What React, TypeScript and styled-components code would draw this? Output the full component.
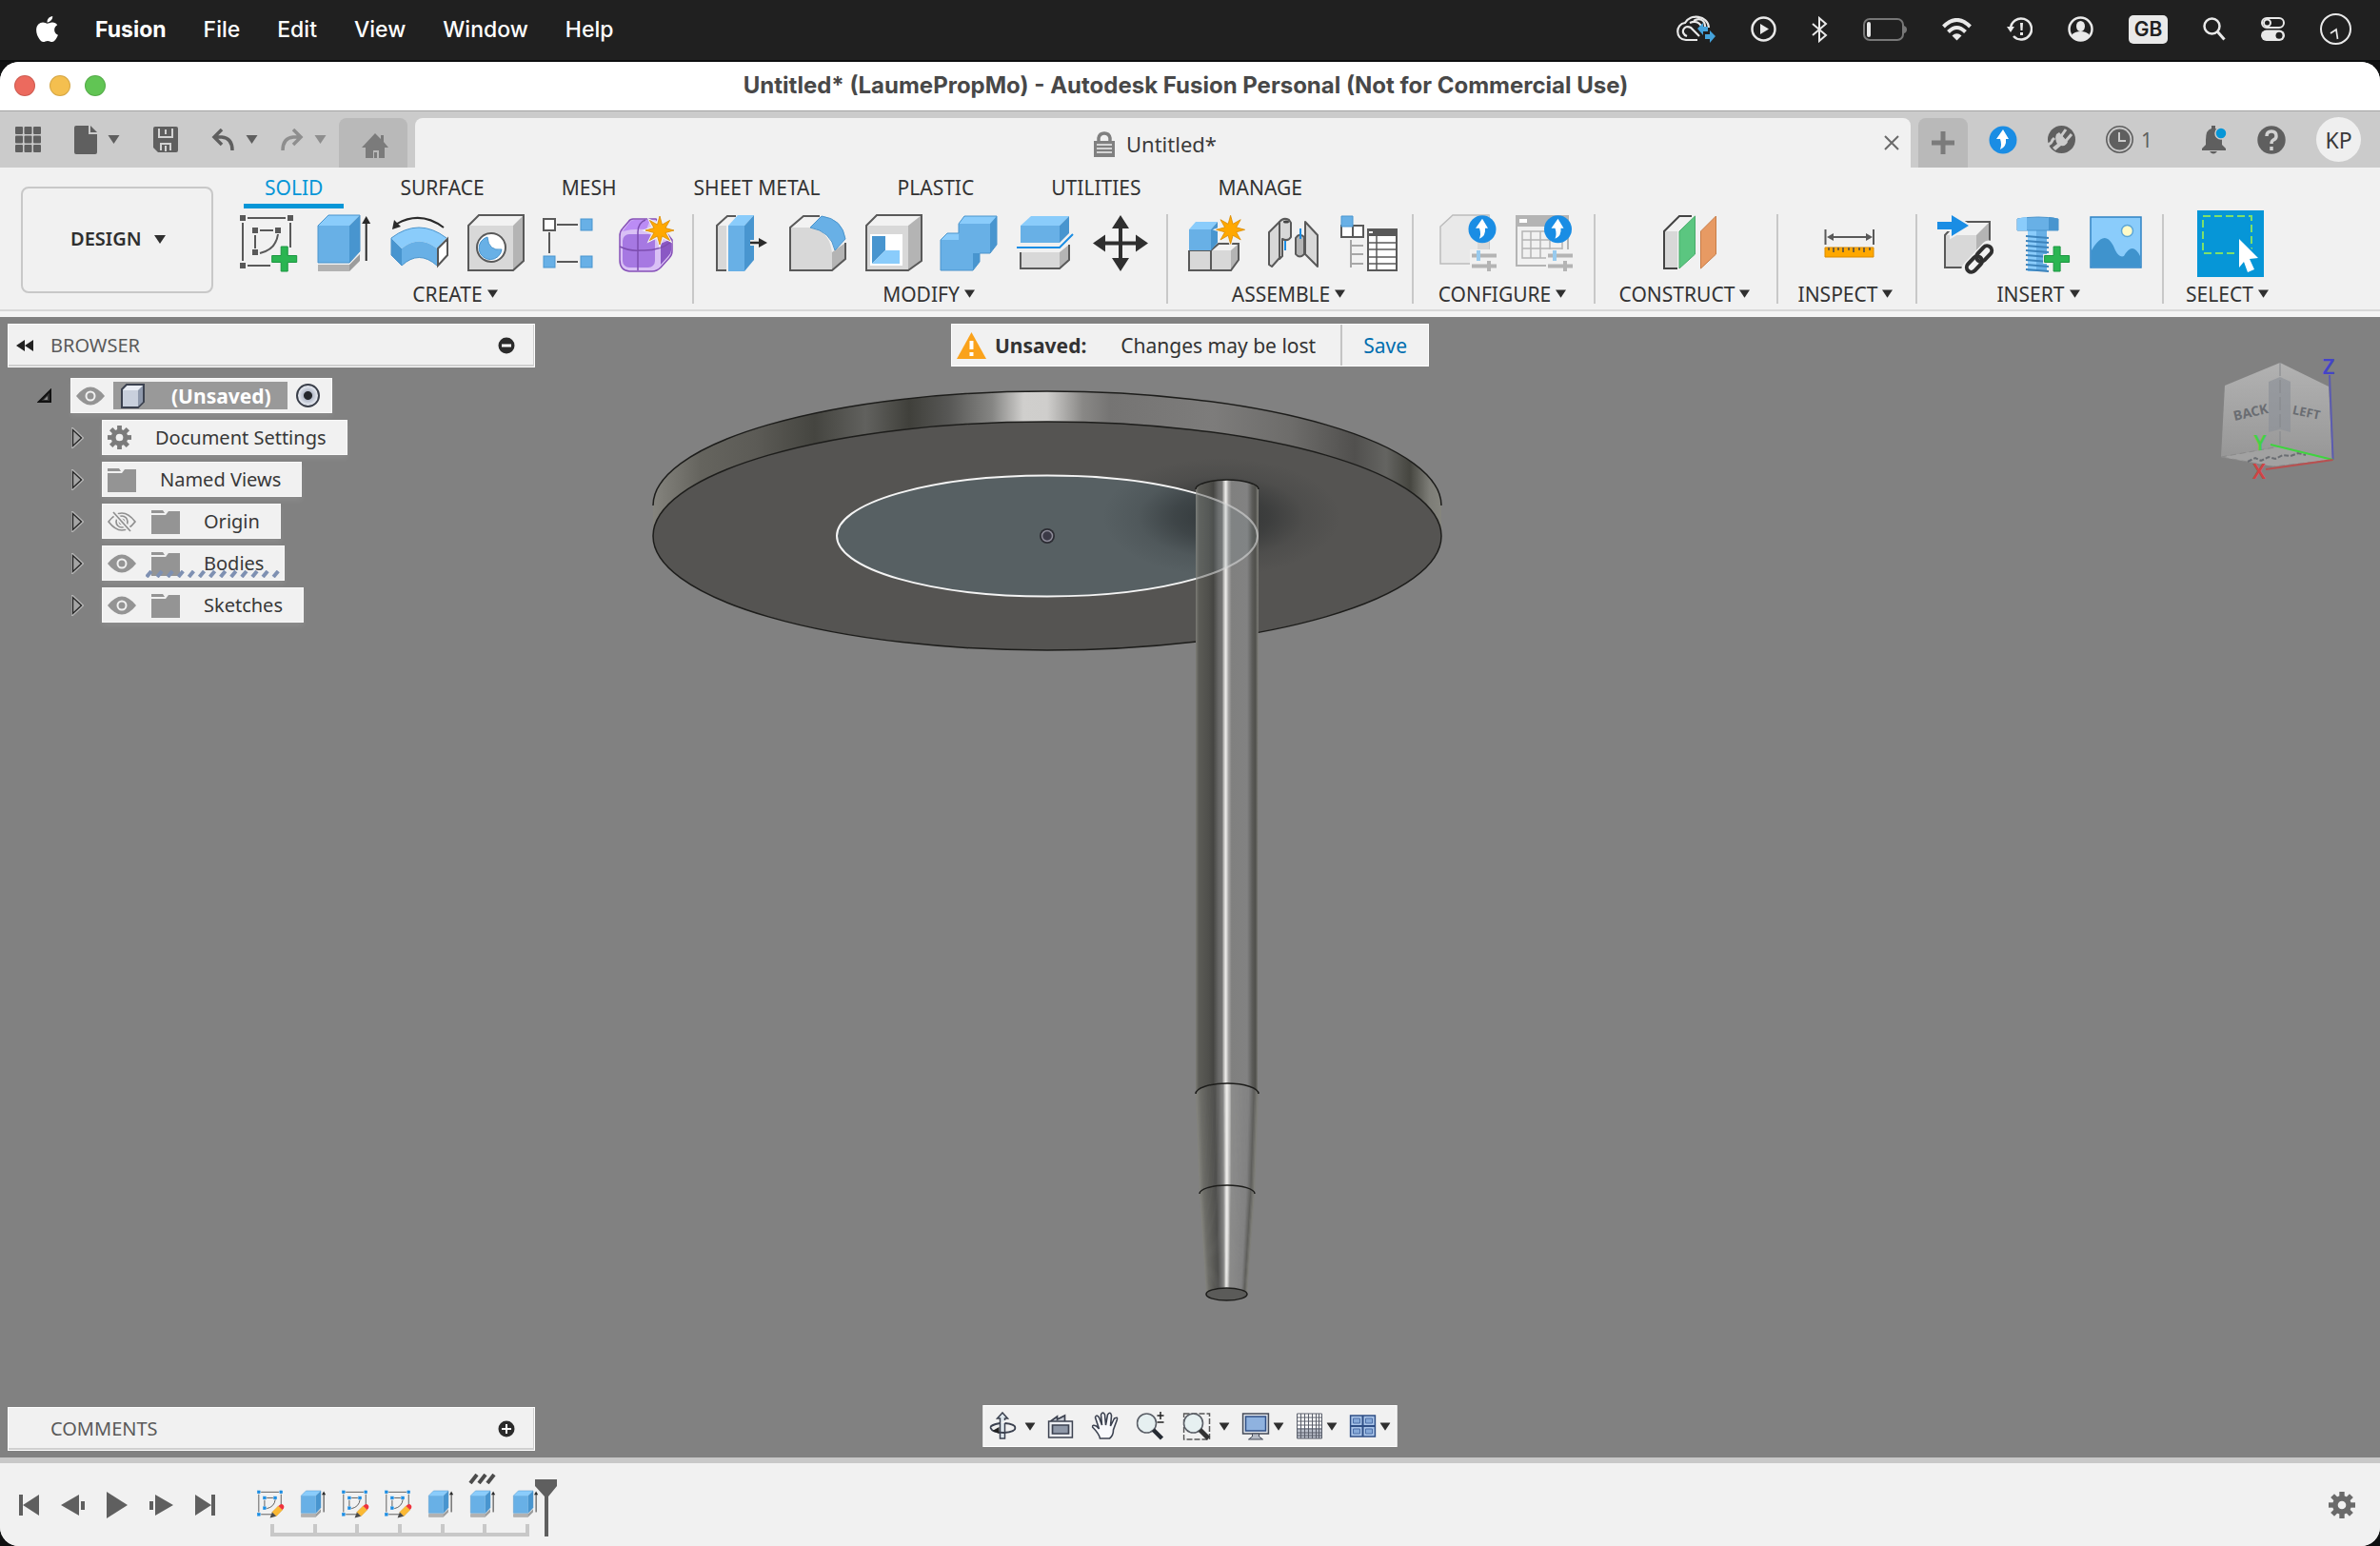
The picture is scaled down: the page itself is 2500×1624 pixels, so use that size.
import React from 'react';
import styled, { createGlobalStyle, css } from 'styled-components';
import { FaApple } from 'react-icons/fa';

const ui = `"Noto Sans", "Open Sans", sans-serif`;
const system = `Inter, "Liberation Sans", sans-serif`;

const GlobalStyle = createGlobalStyle`
  *, *::before, *::after { box-sizing: border-box; }
  html, body { margin: 0; background: #101112; }
  body { font-family: ${ui}; font-size: 20px; color: #2f2f2f; }
  button, select, input { font: inherit; color: inherit; margin: 0; }
  ul, ol { list-style: none; margin: 0; padding: 0; }
  svg { display: block; flex: none; }
`;

const Page = styled.div`
  min-height: 100vh;
  display: flex;
  flex-direction: column;
`;

const plainButton = css`
  display: flex;
  align-items: center;
  justify-content: center;
  padding: 0;
  border: 0;
  background: none;
  line-height: 28px;
  white-space: nowrap;
`;

const PlainButton = styled.button`${plainButton}`;

/* ---------- system menu bar ---------- */

const MenuBar = styled.header`
  display: flex;
  justify-content: space-between;
  align-items: center;
  height: 65px;
  padding: 0 30px 2px 34px;
  border-bottom: 2px solid #0c0e0f;
  background: #202020;
  color: #fff;
  font-family: ${system};
`;

const MenuItems = styled.nav`
  display: flex;
  align-items: center;
  gap: 39px;
`;

const MenuItem = styled.button<{ $bold?: boolean }>`
  ${plainButton}
  font-size: 23px;
  font-weight: ${(p) => (p.$bold ? 700 : 500)};
`;

const AppleButton = styled.button`
  ${plainButton}
  margin-right: -4px;
`;

const StatusItems = styled.div`
  display: flex;
  align-items: center;
  gap: 37px;
`;

const InputSource = styled.button`
  ${plainButton}
  width: 41px;
  height: 30px;
  border-radius: 5px;
  background: #e9e9e9;
  color: #202020;
  font-size: 21px;
  font-weight: 600;
`;

/* ---------- window ---------- */

const Window = styled.div`
  flex: 1;
  display: flex;
  flex-direction: column;
  overflow: hidden;
  border-radius: 20px;
  background: #f1f1f1;
`;

const TitleBar = styled.div`
  display: grid;
  grid-template-columns: 120px 1fr 144px;
  align-items: center;
  height: 52px;
  padding: 0 0 2px 15px;
  border-bottom: 1px solid #a4a4a4;
  background: #fff;
`;

const TrafficLights = styled.div`
  display: flex;
  gap: 15px;
`;

const Light = styled.button<{ $color: string }>`
  width: 22px;
  height: 22px;
  padding: 0;
  border: 1px solid rgba(0, 0, 0, 0.12);
  border-radius: 50%;
  background: ${(p) => p.$color};
`;

const Title = styled.h1`
  margin: 0;
  text-align: center;
  font-family: ${system};
  font-size: 24px;
  line-height: 28px;
  font-weight: 700;
  color: #484848;
`;

const TabStrip = styled.div`
  display: flex;
  align-items: stretch;
  height: 59px;
  background: #cbcbcb;
`;

const QuickTools = styled.div`
  display: flex;
  align-items: center;
  gap: 35px;
  padding: 0 13px 0 16px;
  color: #5f5f5f;
`;

const ToolWithMenu = styled.button`
  ${plainButton}
  gap: 11px;
`;

const HistoryTools = styled.div`
  display: flex;
  gap: 23px;
`;

const FadedTool = styled(ToolWithMenu)`
  color: #8e8e8e;
`;

const SideTab = styled.button<{ $width: number }>`
  ${plainButton}
  width: ${(p) => p.$width}px;
  margin-top: 7px;
  border-radius: 8px 8px 0 0;
  background: #b9b9b9;
  color: #7b7b7b;
`;

const HomeTab = styled(SideTab)`
  margin-left: auto;
  padding: 6px 0 0 4px;
`;

const ActiveTab = styled.div`
  flex: 1;
  display: flex;
  align-items: center;
  margin: 7px 8px 0;
  padding: 0 12px;
  border-radius: 8px 8px 0 0;
  background: #f1f1f1;
`;

const TabName = styled.div`
  flex: 1;
  display: flex;
  align-items: center;
  justify-content: center;
  gap: 12px;
  padding-top: 2px;
  font-size: 22px;
  line-height: 28px;
  color: #3a3a3a;
`;

const AccountTools = styled.div`
  display: flex;
  align-items: center;
  gap: 32px;
  padding: 0 20px 0 22px;
  color: #5f5f5f;
`;

const JobStatus = styled.button`
  ${plainButton}
  gap: 8px;
  padding-right: 20px;
  font-size: 21px;
`;

const Avatar = styled.button`
  ${plainButton}
  width: 47px;
  height: 47px;
  border-radius: 50%;
  background: #efefef;
  font-size: 23px;
  color: #3a3a3a;
`;

/* ---------- ribbon ---------- */

const Ribbon = styled.section`
  display: flex;
  gap: 25px;
  height: 157px;
  padding-left: 22px;
  border-bottom: 6px solid #f4f4f4;
  box-shadow: inset 0 -2px 0 #d8d8d8;
`;

const Workspace = styled.div`
  position: relative;
  width: 202px;
  height: 112px;
  margin-top: 20px;
`;

const WorkspaceSelect = styled.select`
  width: 100%;
  height: 100%;
  padding: 0 0 4px 50px;
  border: 2px solid #c8c8c8;
  border-radius: 8px;
  background: transparent;
  appearance: none;
  font-weight: 600;
`;

const WorkspaceCaret = styled.div`
  position: absolute;
  right: 50px;
  top: 51px;
  pointer-events: none;
`;

const RibbonBody = styled.div`
  flex: 1;
`;

const RibbonTabs = styled.div`
  display: flex;
  gap: 37px;
  height: 44px;
  padding-left: 7px;
`;

const RibbonTab = styled.button<{ $active?: boolean }>`
  ${plainButton}
  height: 43px;
  padding: 3px 22px 0;
  border-bottom: 5px solid ${(p) => (p.$active ? '#0696d7' : 'transparent')};
  font-size: 21px;
  color: ${(p) => (p.$active ? '#0696d7' : '#333')};
`;

const Groups = styled.div`
  display: flex;
`;

const Group = styled.div<{ $min: number; $first?: boolean }>`
  position: relative;
  display: flex;
  flex-direction: column;
  align-items: center;
  min-width: ${(p) => p.$min}px;
  padding: 0 16px 0 ${(p) => (p.$first ? 0 : 17)}px;
  &:not(:last-child)::after {
    content: '';
    position: absolute;
    right: 0;
    top: 5px;
    width: 2px;
    height: 94px;
    background: #c8c8c8;
  }
`;

const GroupIcons = styled.div`
  display: flex;
  gap: 16px;
  height: 72px;
`;

const GroupLabel = styled.button`
  ${plainButton}
  gap: 5px;
  height: 33px;
  margin: 0 -8px 0 -14px;
  font-size: 21px;
  color: #333;
`;

/* ---------- canvas and panels ---------- */

const Canvas = styled.main`
  position: relative;
  flex: 1;
  background: #818181;
`;

const ModelView = styled.svg`
  position: absolute;
  inset: 0;
  width: 100%;
  height: 100%;
`;

const panelSkin = css`
  border: 1px solid #fff;
  background: #f1f1f1;
`;

const BrowserColumn = styled.aside`
  position: absolute;
  left: 8px;
  top: 7px;
  width: 554px;
`;

const PanelHeader = styled.div`
  ${panelSkin}
  display: grid;
  grid-template-columns: 36px 1fr 18px;
  align-items: center;
  height: 46px;
  padding: 0 20px 0 8px;
  box-shadow: inset -1px -2px 0 #cfcfcf;
  line-height: 28px;
  color: #5a5a5a;
`;

const CommentsPanel = styled.aside`
  position: absolute;
  left: 8px;
  bottom: 7px;
  width: 554px;
`;

const Tree = styled.ul`
  display: flex;
  flex-direction: column;
  gap: 7px;
  padding-top: 11px;
`;

const TreeItem = styled.li<{ $root?: boolean }>`
  display: flex;
  align-items: center;
  gap: 19px;
  height: 37px;
  padding-left: ${(p) => (p.$root ? 31 : 67)}px;
`;

const TreeBox = styled.div`
  position: relative;
  display: flex;
  align-items: center;
  gap: 16px;
  height: 37px;
  padding: 0 22px 0 6px;
  background: #f1f1f1;
  box-shadow: 0 0 0 1px #f8f8f8 inset, 0 4px 6px rgba(255, 255, 255, 0.08);
  line-height: 28px;
  color: #383838;
  white-space: nowrap;
`;

const RootBox = styled(TreeBox)`
  gap: 9px;
  padding: 0 13px 0 6px;
`;

const RootName = styled.div`
  display: flex;
  align-items: center;
  gap: 28px;
  height: 29px;
  padding: 0 17px 0 8px;
  background: #999;
  color: #fff;
  font-size: 21px;
  font-weight: 700;
`;

const TreeName = styled.span`
  padding-left: 9px;
`;

const ActiveRadio = styled.input`
  appearance: none;
  width: 25px;
  height: 25px;
  border: 2px solid #3a3f4a;
  border-radius: 50%;
  background: radial-gradient(circle, #23262c 0 4px, #b5bccb 5px, #eef1f7 11px);
`;

const Squiggle = styled.svg`
  position: absolute;
  left: 46px;
  bottom: 3px;
`;

const Notice = styled.div`
  ${panelSkin}
  position: absolute;
  top: 7px;
  left: 50%;
  transform: translateX(-50%);
  display: flex;
  align-items: center;
  height: 45px;
  font-size: 21px;
  line-height: 28px;
  color: #333;
  white-space: nowrap;
`;

const NoticeText = styled.div`
  display: flex;
  align-items: center;
  gap: 36px;
  padding: 0 26px 0 5px;
`;

const NoticeTitle = styled.strong`
  display: flex;
  align-items: center;
  gap: 9px;
`;

const SaveButton = styled.button`
  ${plainButton}
  height: 43px;
  padding: 0 22px;
  border-left: 2px solid #c4c4c4;
  color: #006eaf;
`;

const NavBar = styled.div`
  ${panelSkin}
  position: absolute;
  bottom: 11px;
  left: 50%;
  transform: translateX(-50%);
  display: flex;
  align-items: center;
  gap: 19px;
  height: 44px;
  padding: 0 12px 0 6px;
`;

const NavButton = styled.button<{ $gap?: number }>`
  ${plainButton}
  gap: ${(p) => p.$gap ?? 0}px;
  margin-right: ${(p) => (p.$gap ? -6 : 0)}px;
`;

/* ---------- timeline ---------- */

const TimelineBar = styled.footer`
  display: flex;
  align-items: flex-start;
  height: 93px;
  padding: 0 26px 0 20px;
  border-top: 6px solid #c8c8c8;
  background: #f1f1f1;
  color: #5f5f5f;
`;

const Playback = styled.div`
  display: flex;
  align-items: center;
  gap: 23px;
  height: 88px;
`;

const Features = styled.ol`
  display: flex;
  width: 312px;
  margin-left: 36px;
`;

const Feature = styled.li`
  position: relative;
  flex: 1;
  display: flex;
  flex-direction: column;
  align-items: center;
  padding-top: 28px;
  height: 77px;
  &::before, &::after {
    content: '';
    position: absolute;
    background: #c8c8c8;
  }
  &::before { left: 50%; bottom: 0; width: 4px; height: 13px; }
  &::after { left: 50%; bottom: 0; width: 100%; height: 4px; }
  &:last-child::after { width: 4px; }
`;

const Pending = styled.svg`
  position: absolute;
  top: 11px;
`;

const Marker = styled.div`
  position: relative;
  z-index: 1;
  margin: 17px auto 0 -12px;
`;

const SettingsButton = styled.button`
  ${plainButton}
  height: 88px;
`;

/* ---------- drawings ---------- */

const Caret = ({ color = '#2f2f2f', w = 12 }: { color?: string; w?: number }) => (
  <svg width={w} height="9" viewBox="0 0 12 9"><path d="M0 0h12L6 9z" fill={color} /></svg>
);

const B = { light: '#8accfb', mid: '#68b0e6', dark: '#4895cf', line: '#4a94cc' };
const G = { light: '#f2f2f2', mid: '#d8d8d8', dark: '#b4b4b4', line: '#595959' };

const Big = ({ children, size = 64 }: { children: React.ReactNode; size?: number }) => (
  <svg width={size} height={size} viewBox="0 0 64 64">{children}</svg>
);

const starPoints = (cx: number, cy: number, outer: number, inner: number) =>
  Array.from({ length: 16 }, (_, i) => {
    const r = i % 2 ? inner : outer;
    const a = (Math.PI / 8) * i;
    return `${cx + r * Math.sin(a)},${cy - r * Math.cos(a)}`;
  }).join(' ');

const Star = ({ x, y }: { x: number; y: number }) => (
  <g>
    <polygon points={starPoints(x, y, 16, 8)} fill="#f1f1f1" stroke="#f1f1f1" strokeWidth="2" />
    <polygon points={starPoints(x, y, 15, 6.5)} fill="#ffa800" stroke="#d98a00" strokeWidth="0.8" />
  </g>
);

const Plus = ({ x, y }: { x: number; y: number }) => {
  const d = `M${x - 3.5} ${y - 13}h7v9.500h9.500v7h-9.500v9.500h-7v-9.500h-9.500v-7h9.500z`;
  return (
    <g>
      <path d={d} fill="#f1f1f1" stroke="#f1f1f1" strokeWidth="3" />
      <path d={d} fill="#2bb552" stroke="#1b9640" strokeWidth="1" />
    </g>
  );
};

const SketchShape = ({ dot, edit }: { dot: string; edit?: boolean }) => (
  <Big size={edit ? 30 : 64}>
    <g fill="none" stroke="#595959" strokeWidth="2">
      <path d="M11 5h40M6 10v40M56 10v26M11 55h24M24 18h14M19 23v14M43 22Q41 38 24 42" />
    </g>
    {[[6, 5], [56, 5], [6, 55], [19, 18], [43, 18], [19, 41]].map(([x, y]) => (
      <rect key={`${x}-${y}`} x={x - 3} y={y - 3} width="6" height="6" fill={dot} stroke={dot} strokeWidth={edit ? 1 : 0} />
    ))}
    {edit && (
      <g>
        <path d="M36 50l14-14 9 9-14 14z" fill="#fbb934" stroke="#d99413" strokeWidth="1" />
        <path d="M50 36q7-7 11-2 4 5-2 11z" fill="#f0323c" />
        <path d="M36 50l9 9-14 4z" fill="#4a4a4a" />
      </g>
    )}
    {!edit && <Plus x={49.7} y={48} />}
  </Big>
);

const Extrude = ({ size = 64 }: { size?: number }) => (
  <Big size={size}>
    <path d="M5 54h33l11-11v7L38 61H5z" fill="#9c9c9c" />
    <path d="M5 54h33v7H5z" fill="#b2b2b2" />
    <path d="M5 13h33v39H5z" fill={B.mid} />
    <path d="M5 13L16 2h33L38 13z" fill={B.light} />
    <path d="M38 13L49 2v38L38 52z" fill={B.dark} />
    <path d="M5 13L16 2h33v38L38 52H5z" fill="none" stroke={B.line} strokeWidth="1" />
    <path d="M55.700 8v42" stroke="#2a2a2a" strokeWidth="2" />
    <path d="M55.700 3l4.500 8h-9z" fill="#2a2a2a" />
  </Big>
);

const Revolve = () => (
  <Big>
    <path d="M57 15Q33-3 8 11" fill="none" stroke="#2a2a2a" strokeWidth="2" />
    <path d="M3 17l2-10 7 7z" fill="#2a2a2a" />
    <path d="M2 26l11 11v18L2 44z" fill={B.dark} />
    <path d="M2 26Q31 4 60 26L50 37Q31 22 13 37z" fill={B.light} />
    <path d="M13 37Q31 22 50 37v18Q31 38 13 55z" fill={B.mid} />
    <path d="M2 26Q31 4 60 26M2 26v18l11 11Q31 38 50 55" fill="none" stroke={B.line} />
    <path d="M51 37l10-10v17L51 55z" fill="#fff" stroke="#555" strokeWidth="2" />
  </Big>
);

const GreyBlock = ({ d = 0 }: { d?: number }) => (
  <g>
    <path d={`M3 13L14 2h47v48L${50 - d} 60H3z`} fill={G.light} />
    <path d={`M3 13h${47 - d}v47H3z`} fill={G.mid} />
    <path d={`M${50 - d} 13L61 2v48L${50 - d} 60z`} fill={G.dark} />
    <path d={`M3 13L14 2h47v48L${50 - d} 60H3z`} fill="none" stroke={G.line} strokeWidth="2" />
  </g>
);

const Hole = () => (
  <Big>
    <GreyBlock />
    <circle cx="27" cy="36" r="15" fill="#fff" stroke={G.line} strokeWidth="2" />
    <path d="M23 25a12 12 0 1 0 15 13Q24 40 23 25z" fill={B.mid} stroke={B.dark} />
  </Big>
);

const Pattern = () => (
  <Big>
    <path d="M16 12h22M8 20v22M16 51h22" stroke={G.line} strokeWidth="2" />
    <rect x="2" y="6" width="12" height="12" fill="#fff" stroke={G.line} strokeWidth="2" />
    {[[41, 6], [2, 45], [41, 45]].map(([x, y]) => (
      <rect key={`${x}${y}`} x={x} y={y} width="12" height="12" fill={B.mid} stroke={B.dark} />
    ))}
  </Big>
);

const Form = () => (
  <Big>
    <path d="M16 6h24l17 22v12q0 4-3 7l-9 10q-4 4-9 4H12Q2 60 2 49V24q0-5 3-8l6-7q2-3 5-3z" fill="#d9c0f5" stroke="#8650b8" strokeWidth="1.500" />
    <path d="M5 19l7-9q2-3 6-3h16l-4 10q-14-1-25 2z" fill="#bb8cf5" />
    <rect x="5" y="22" width="34" height="35" rx="7" fill="#a678e2" />
    <path d="M45 32l11-5v12q0 3-3 6l-8 9z" fill="#8a58c4" />
    <path d="M21 60V20q0-10 8-13M2 35q10 5 22 4 20 1 32-9" fill="none" stroke="#7d4eb0" strokeWidth="1.500" />
    <Star x={44} y={18} />
  </Big>
);

const PressPull = () => (
  <Big>
    <path d="M6 13L17 3h9L16 13v47H6z" fill={G.light} />
    <path d="M6 13h10v47H6z" fill={G.mid} />
    <path d="M26 3h-9L6 13v47h10" fill="none" stroke={G.line} strokeWidth="2" />
    <path d="M18 13h17v48H18z" fill={B.mid} />
    <path d="M18 13L28 2h17L35 13z" fill={B.light} />
    <path d="M35 13L45 2v47L35 61z" fill={B.dark} />
    <path d="M41 31h11" stroke="#f1f1f1" strokeWidth="6" />
    <path d="M41 31h11" stroke="#2a2a2a" strokeWidth="2.500" />
    <path d="M59 31l-9-5v10z" fill="#2a2a2a" />
  </Big>
);

const Fillet = () => (
  <Big>
    <path d="M3 15L17 3h17L24 15Q44 18 47 39L61 31v17L47 60H3z" fill={G.light} />
    <path d="M3 15h21q20 3 23 26v19H3z" fill={G.mid} />
    <path d="M47 41l14-10v17L47 60z" fill={G.dark} />
    <path d="M34 3H17L3 15v45h44l14-12V31" fill="none" stroke={G.line} strokeWidth="2" />
    <path d="M36 3q22 3 25 24L50 39Q46 19 24 15z" fill={B.mid} stroke={B.line} />
  </Big>
);

const Shell = () => (
  <Big>
    <GreyBlock d={3} />
    <path d="M7 22h34v33H7z" fill="#fff" />
    <path d="M9 24h14v15L9 53z" fill={B.dark} />
    <path d="M23 39h15v14H9z" fill={B.light} />
  </Big>
);

const Combine = () => (
  <Big>
    <path d="M1 28l7-7h12V11l6-8h34v30l-7 9H42v9l-7 9H1z" fill={B.dark} />
    <path d="M1 28l7-7h14v8zM20 11l6-8h34l-7 8z" fill={B.light} />
    <path d="M1 28h19V11h33v31H35v18H1z" fill={B.mid} />
    <path d="M1 28l7-7h12V11l6-8h34v30l-7 9H42v9l-7 9H1z" fill="none" stroke={B.line} />
  </Big>
);

const Split = () => (
  <Big>
    <path d="M5 13h41v18H5z" fill={B.mid} />
    <path d="M5 13L16 3h40L46 13z" fill={B.light} />
    <path d="M46 13L56 3v18L46 31z" fill={B.dark} />
    <path d="M1 36h45l14-14" fill="none" stroke="#1a8de4" strokeWidth="2" />
    <path d="M5 41h41v17H5z" fill={G.mid} />
    <path d="M46 41l10-8v16L46 58z" fill={G.dark} />
    <path d="M5 41v17h41l10-9V33" fill="none" stroke={G.line} strokeWidth="2" />
  </Big>
);

const Move = () => (
  <Big>
    <path d="M30 12v40M10 31.500h40" stroke="#2f2f2f" strokeWidth="4" />
    <path d="M30 2l9 14H21zM30 61l9-14H21zM1 31.500l13-9v18zM59 31.500l-13-9v18z" fill="#2f2f2f" />
  </Big>
);

const NewComponent = () => (
  <Big>
    <path d="M27 39l8-7h21v17l-8 11H4V39z" fill={G.light} />
    <path d="M4 39h23v21H4zM27 39h21v21H27z" fill={G.mid} />
    <path d="M48 39l8-7v17l-8 11z" fill={G.dark} />
    <path d="M4 39v21h44l8-11V32H35l-8 7v21M4 39h23" fill="none" stroke={G.line} strokeWidth="2" />
    <path d="M4 17h23v22H4z" fill={B.mid} />
    <path d="M4 17l7-8h23l-7 8z" fill={B.light} />
    <path d="M27 17l7-8v22l-7 8z" fill={B.dark} />
    <Star x={47.6} y={17.3} />
  </Big>
);

const Joint = () => (
  <Big>
    <g stroke={G.line} strokeWidth="2" strokeLinejoin="round">
      <path d="M8 20L19 9v38L11 56l-3-2z" fill={G.mid} />
      <path d="M19 9q4-5 10-2l2 3v15q-3 5-9 2v18l-3 3z" fill={G.mid} />
      <path d="M46 9l13 14v33L46 43z" fill={G.mid} />
      <path d="M36 26q4-6 9-1v18q-5 5-9 0z" fill={G.dark} />
    </g>
    <ellipse cx="26" cy="9" rx="3" ry="1.500" fill="#444" />
    <path d="M25 29v10M41 16v11" stroke="#1a8de4" strokeWidth="2" />
  </Big>
);

const Bom = () => (
  <Big>
    <path d="M4 13h12v12H4zM16 13h11v12H16z" fill="#fff" stroke={G.line} strokeWidth="2" />
    <path d="M4 3h12v11H4z" fill={B.mid} stroke={B.dark} />
    <path d="M14 28v29M14 34h13M14 43h13M14 53h13" stroke="#a6a6a6" strokeWidth="2" />
    <path d="M32 17h30v43H32z" fill="#fff" stroke={G.line} strokeWidth="2" />
    <path d="M32 17h30v7H32z" fill={G.line} />
    <path d="M33 20h4" stroke="#fff" strokeWidth="2" />
    <path d="M41 24v36M32 31h30M32 38h30M32 46h30M32 53h30" stroke={G.line} strokeWidth="1.500" />
  </Big>
);

const UpBadge = ({ x, y, r = 14.5 }: { x: number; y: number; r?: number }) => (
  <g>
    <circle cx={x} cy={y} r={r} fill="#1a8de4" />
    <path transform={`translate(${x} ${y})`} d="M0-11l6 10H3q1 8-6 11 2-5 0-11h-4z" fill="#fff" />
  </g>
);

const Sliders = () => (
  <g>
    <path d="M35 38h29v24H35z" fill="#f1f1f1" />
    <path d="M37 44.500h26M37 55.500h26M55 50v11" stroke="#b4b4b4" strokeWidth="4" />
    <path d="M44 39v11" stroke="#98cbef" strokeWidth="4" />
  </g>
);

const ConfigureModel = () => (
  <Big>
    <path d="M4 14L17 2h38v42L43 53H4z" fill="#e9e9e9" stroke="#bcbcbc" strokeWidth="1.500" />
    <path d="M43 14L55 2v42L43 53z" fill="#d8d8d8" />
    <Sliders />
    <UpBadge x={48} y={16.7} />
  </Big>
);

const ConfigureTable = () => (
  <Big>
    <path d="M4 3h54v52H4z" fill="#f1f1f1" stroke="#b4b4b4" strokeWidth="2" />
    <path d="M3 2h56v12H3z" fill="#b4b4b4" />
    <path d="M7 6h8v4H7z" fill="#fff" />
    <path d="M10 19h42v28H10zM19 19v28M29 19v28M39 19v28M10 28h42M10 37h42" fill="none" stroke="#b4b4b4" strokeWidth="1.500" />
    <Sliders />
    <UpBadge x={47.5} y={16.7} />
  </Big>
);

const Construct = () => (
  <Big>
    <path d="M7 19L23 3h13L22 19v39H7z" fill={G.light} />
    <path d="M7 19h14v39H7z" fill={G.mid} />
    <path d="M36 3H23L7 19v39h14" fill="none" stroke="#444" strokeWidth="2" />
    <path d="M23 19L39.500 3v40L23 58z" fill="#5bc680" stroke="#46ab69" />
    <path d="M45.500 19L61.500 3v40l-16 15z" fill="#e79a63" stroke="#c77d48" />
  </Big>
);

const Measure = () => (
  <Big>
    <path d="M7.500 17v16M58 17v16M12 25h42" stroke={G.line} strokeWidth="2" />
    <path d="M9 25l7-4v8zM57 25l-7-4v8z" fill={G.line} />
    <path d="M7 36h51v10H7z" fill="#ffa800" stroke="#d98a00" />
    <path d="M11 36v3M16 36v5M21 36v3M26 36v5M32 36v3M37 36v5M43 36v3M48 36v5M54 36v3" stroke="#4a4a4a" strokeWidth="1.500" />
  </Big>
);

const InsertDerive = () => (
  <Big>
    <path d="M11 23L24 9h34v34L44 57H11z" fill={G.light} />
    <path d="M11 23h33v34H11z" fill={G.mid} />
    <path d="M44 23L58 9v34L44 57z" fill={G.dark} />
    <path d="M11 23L24 9h34v34L44 57H11z" fill="none" stroke={G.line} strokeWidth="2" />
    <path d="M3 9h15V2l18 11-18 11v-7H3z" fill="#f1f1f1" stroke="#f1f1f1" strokeWidth="4" />
    <path d="M3 9h15V2l18 11-18 11v-7H3z" fill="#1a8de4" />
    <g fill="none" transform="rotate(-47 47 48)">
      <path d="M32 48h30" stroke="#f1f1f1" strokeWidth="17" strokeLinecap="round" />
      <g stroke="#2f2f2f" strokeWidth="4">
        <rect x="30" y="43" width="19" height="10" rx="5" /><rect x="45" y="43" width="19" height="10" rx="5" />
      </g>
    </g>
  </Big>
);

const Bolt = () => (
  <Big>
    <path d="M18 18h20v43H18z" fill={B.mid} />
    <path d="M18 18h9v43h-9z" fill={B.light} />
    <path d="M7 6q22-4 43 0v12H7z" fill={B.mid} stroke={B.line} />
    <path d="M7 6q5-2 10-2v14H7z" fill={B.light} /><path d="M40 4q5 0 10 2v12H40z" fill={B.dark} />
    <path d="M16 24l24 2M16 29l24 2M16 34l24 2M16 39l24 2M16 44l24 2M16 49l24 2M16 54l24 2M16 59l24 2" stroke="#3c83bb" strokeWidth="2" />
    <Plus x={48.6} y={48} />
  </Big>
);

const Picture = () => (
  <Big>
    <path d="M4 4h53v53H4z" fill={B.light} stroke="#2f83c4" strokeWidth="1.500" />
    <path d="M5 39q15-26 25 0 4 8 9 6 9-16 17 0v11H5z" fill="#3f93cd" />
    <circle cx="42.500" cy="18.500" r="6" fill="#fffbc8" stroke="#5aa5d8" strokeWidth="1.500" />
  </Big>
);

const SelectTool = () => (
  <svg width="70" height="72" viewBox="0 0 70 72">
    <path d="M0 1h70v70H0z" fill="#0696d7" />
    <path d="M6 7h51v39H6z" fill="none" stroke="#7ee06a" strokeWidth="2" strokeDasharray="8 4" />
    <path d="M44 31l20 20-9 1 5 11-7 3-4-11-6 6z" fill="#0696d7" stroke="#0696d7" strokeWidth="4" />
    <path d="M44 31l20 20-9 1 5 11-7 3-4-11-5 6z" fill="#fff" />
  </svg>
);

const Arrow = ({ open }: { open?: boolean }) =>
  open ? (
    <svg width="16" height="16" viewBox="0 0 16 16"><path d="M14 2v12H2z" fill="#333" stroke="#111" strokeWidth="2" /><path d="M11 8v4H7z" fill="#888" /></svg>
  ) : (
    <svg width="13" height="22" viewBox="0 0 13 22"><path d="M1.500 2.500v17l9-8.500z" fill="#9c9c9c" stroke="#b4b4b4" strokeWidth="4" /><path d="M1.500 2.500v17l9-8.500z" fill="#a4a4a4" stroke="#262626" strokeWidth="1.400" /></svg>
  );

const Eye = ({ off }: { off?: boolean }) => (
  <svg width="30" height="22" viewBox="0 0 30 22">
    {off ? (
      <g fill="none" stroke="#8f8f8f" strokeWidth="1.700">
        <path d="M1 11Q15-7 29 11 15 29 1 11z" /><circle cx="15" cy="11" r="6" /><circle cx="15" cy="11" r="2.500" />
        <path d="M6 1l18 20" stroke="#f1f1f1" strokeWidth="5" /><path d="M6 1l18 20" />
      </g>
    ) : (
      <g><path d="M0 11Q15-8 30 11 15 30 0 11z" fill="#949494" /><circle cx="15" cy="11" r="4.500" fill="#949494" stroke="#f1f1f1" strokeWidth="2" /></g>
    )}
  </svg>
);

const Folder = () => (
  <svg width="30" height="26" viewBox="0 0 30 26"><path d="M0 6h15l3-4h12v24H0z" fill="#949494" /><path d="M0 1h12l2 3H0z" fill="#949494" /><path d="M0 5h14l3-4" fill="none" stroke="#f1f1f1" strokeWidth="1" /></svg>
);

const Gear = ({ size, color }: { size: number; color: string }) => (
  <svg width={size} height={size} viewBox="-12 -12 24 24" fill={color}>
    {[0, 45, 90, 135].map((a) => <rect key={a} x="-2.300" y="-12" width="4.600" height="24" transform={`rotate(${a})`} />)}
    <circle r="8.500" /><circle r="3.700" fill="#f1f1f1" />
  </svg>
);

const SmallCube = () => (
  <svg width="25" height="26" viewBox="0 0 25 26"><path d="M1 6l5-5h18v18l-6 6H1z" fill="#e9edf4" stroke="#3c4250" strokeWidth="2" /><path d="M2 7h16v17H2z" fill="#c9d0dd" /><path d="M18 7l5-5v17l-5 5z" fill="#8f99ac" /></svg>
);

const Round = ({ plus }: { plus?: boolean }) => (
  <svg width="18" height="18" viewBox="0 0 18 18"><circle cx="9" cy="9" r="8.500" fill="#2b2b2b" /><path d={plus ? 'M4 9h10M9 4v10' : 'M4 9h10'} stroke="#fff" strokeWidth={plus ? 2 : 3} /></svg>
);

/* ---------- 3D scene ---------- */

const rimStops: [number, string][] = [[0, '#85847e'], [0.06, '#65645e'], [0.13, '#5c5b56'], [0.205, '#454540'], [0.27, '#61615e'], [0.325, '#40403b'], [0.375, '#575755'], [0.43, '#858583'], [0.47, '#d0cfcd'], [0.5, '#cfcecc'], [0.545, '#898886'], [0.58, '#757473'], [0.71, '#7d7c7b'], [0.81, '#6d6c6a'], [0.89, '#51504e'], [0.93, '#646461'], [0.96, '#464640'], [0.985, '#7d7d77'], [1, '#85857e']];
const rodStops: [number, string][] = [[0, '#7c7c76'], [0.05, '#5b5b56'], [0.2, '#50504c'], [0.28, '#454542'], [0.36, '#686867'], [0.42, '#747473'], [0.45, '#c2c1bf'], [0.48, '#efeeec'], [0.52, '#a8a7a6'], [0.57, '#80807f'], [0.82, '#828282'], [0.9, '#5c5c59'], [0.95, '#50504c'], [1, '#85857f']];
const taperStops: [number, string][] = [[0, '#85857f'], [0.08, '#6c6c67'], [0.2, '#5b5b57'], [0.3, '#4f4f4d'], [0.38, '#6e6e6d'], [0.44, '#8a8a89'], [0.48, '#efeeec'], [0.52, '#e0dfdd'], [0.57, '#8c8c8b'], [0.85, '#828282'], [0.93, '#5e5e5b'], [1, '#85857f']];

const colourAt = (stops: [number, string][], t: number) => {
  const i = Math.max(1, stops.findIndex(([o]) => o >= t));
  const [o0, c0] = stops[i - 1];
  const [o1, c1] = stops[i];
  const k = (t - o0) / (o1 - o0);
  const mix = [1, 3, 5].map((p) => {
    const a = parseInt(c0.slice(p, p + 2), 16);
    const b = parseInt(c1.slice(p, p + 2), 16);
    return Math.round(a + (b - a) * k);
  });
  return `rgb(${mix.join(',')})`;
};

type Edge = [number, number, number, number];

/* A cone section shaded in strips that converge with its sides. */
const Cone = ({ top, bottom }: { top: Edge; bottom: Edge }) => {
  const n = 48;
  const along = ([x0, x1, y, rise]: Edge, t: number) => {
    const u = Math.min(1, t) * 2 - 1;
    return `${x0 + (x1 - x0) * Math.min(1, t)} ${y - rise * Math.sqrt(1 - u * u)}`;
  };
  return (
    <g>
      {Array.from({ length: n }, (_, i) => {
        const a = i / n;
        const b = (i + 1.4) / n;
        return <path key={i} d={`M${along(top, a)}L${along(top, b)}L${along(bottom, b)}L${along(bottom, a)}z`} fill={colourAt(taperStops, (i + 0.5) / n)} />;
      })}
    </g>
  );
};

const Scene = () => (
  <ModelView viewBox="0 333 2500 1198" role="img" aria-label="Model">
    <defs>
      <linearGradient id="rim" gradientUnits="userSpaceOnUse" x1="686" x2="1514" y1="0" y2="0">
        {rimStops.map(([o, c]) => <stop key={o} offset={o} stopColor={c} />)}
      </linearGradient>
      <linearGradient id="rod">
        {rodStops.map(([o, c]) => <stop key={o} offset={o} stopColor={c} />)}
      </linearGradient>
      <radialGradient id="shade">
        <stop offset="0" stopColor="#1c2022" stopOpacity=".66" />
        <stop offset=".4" stopColor="#1c2022" stopOpacity=".42" />
        <stop offset=".7" stopColor="#1c2022" stopOpacity=".12" />
        <stop offset="1" stopColor="#1c2022" stopOpacity="0" />
      </radialGradient>
      <linearGradient id="cubeFace" x1="0" x2="0" y1="0" y2="1">
        <stop offset="0" stopColor="#b2b2b2" /><stop offset="1" stopColor="#979797" />
      </linearGradient>
      <clipPath id="rodClip"><path d="M1256 514A33 10 0 0 1 1322 514V760H1256z" /></clipPath>
    </defs>

    <path d="M686 531A414 120 0 0 1 1514 531V563A414 120 0 0 0 686 563z" fill="url(#rim)" />
    <path d="M686 531A414 120 0 0 1 1514 531" fill="none" stroke="#1d1d1b" strokeWidth="1.500" />
    <ellipse cx="1100" cy="563" rx="414" ry="120" fill="#555452" stroke="#1d1d1b" strokeWidth="1.500" />
    <ellipse cx="1100" cy="563" rx="221" ry="63.500" fill="#576063" />
    <ellipse cx="1283" cy="543" rx="125" ry="62" fill="url(#shade)" />
    <ellipse cx="1100" cy="563" rx="221" ry="63.500" fill="none" stroke="#f4f4f4" strokeWidth="2" />
    <circle cx="1100" cy="563" r="8" fill="#2c2c33" /><circle cx="1100" cy="563" r="5.500" fill="#3b3946" stroke="#8d8b98" strokeWidth="1.500" />

    <path d="M1256 514A33 10 0 0 1 1322 514L1321 1149A33 11 0 0 0 1256 1149z" fill="url(#rod)" />
    <g clipPath="url(#rodClip)">
      <ellipse cx="1100" cy="563" rx="221" ry="63.500" fill="#7e9299" fillOpacity=".15" stroke="#d8d8d8" strokeOpacity=".6" strokeWidth="2" />
    </g>
    <Cone top={[1256, 1322, 1149, 11]} bottom={[1260, 1318, 1254, 9]} />
    <Cone top={[1260, 1318, 1254, 9]} bottom={[1267, 1310, 1360, 0]} />
    <g fill="none" stroke="#1d1d1b" strokeWidth="1.500">
      <path d="M1256 514A33 10 0 0 1 1322 514M1256 1149A33 11 0 0 1 1322 1149M1260 1254A29 9 0 0 1 1318 1254" />
      <ellipse cx="1288.500" cy="1359.500" rx="21.500" ry="6.500" fill="#5b5b59" />
    </g>
  </ModelView>
);

const CubeBox = styled.svg`
  position: absolute;
  top: 22px;
  right: 30px;
`;

const ViewCube = () => (
  <CubeBox width="140" height="167" viewBox="2330 355 140 167" role="img" aria-label="View cube">
    <path d="M2337 405L2395 381V469L2333 480z" fill="url(#cubeFace)" />
    <path d="M2395 381L2446 406 2450 483 2395 469z" fill="url(#cubeFace)" />
    <path d="M2333 480L2395 469 2450 483 2388 490z" fill="#a2a2a2" stroke="#8a8a8a" strokeDasharray="6 4" />
    <path d="M2383 401L2395 396 2406 401V454L2395 451 2383 454z" fill="#8d9199" fillOpacity=".7" />
    <path d="M2395 381V469" stroke="#84868a" strokeDasharray="14 4" />
    <g fontFamily="Noto Sans, sans-serif" fontWeight="700" fill="#6a6d72" textAnchor="middle">
      <text x="2364" y="438" fontSize="14" transform="rotate(-13 2364 432)">BACK</text>
      <text x="2423" y="438" fontSize="13" transform="rotate(12 2423 432)">LEFT</text>
    </g>
    <path d="M2361 485l8-4 6 3 8-4 7 2 8-4 8 1 8-3 8 2" fill="none" stroke="#6a6d72" strokeWidth="2" strokeDasharray="5 2" />
    <g strokeWidth="2" fill="none">
      <path d="M2447 394L2450.600 483" stroke="#5c5cb0" />
      <path d="M2385 467L2450.600 483" stroke="#3fd43f" />
      <path d="M2380 493L2450.600 483" stroke="#b85050" />
    </g>
    <g fontFamily="Noto Sans, sans-serif" fontWeight="600" fontSize="22" textAnchor="middle">
      <text x="2446" y="393" fill="#4444c8">Z</text>
      <text x="2374" y="473" fill="#44d244">Y</text>
      <text x="2373" y="503" fill="#d04444">X</text>
    </g>
  </CubeBox>
);

/* ---------- data ---------- */

const menus = ['File', 'Edit', 'View', 'Window', 'Help'];
const ribbonTabs = ['SOLID', 'SURFACE', 'MESH', 'SHEET METAL', 'PLASTIC', 'UTILITIES', 'MANAGE'];

const groups: { name: string; min: number; tools: [string, React.ReactNode][] }[] = [
  { name: 'CREATE', min: 480, tools: [['Create sketch', <SketchShape dot="#595959" />], ['Extrude', <Extrude />], ['Revolve', <Revolve />], ['Hole', <Hole />], ['Pattern', <Pattern />], ['Create form', <Form />]] },
  { name: 'MODIFY', min: 498, tools: [['Press pull', <PressPull />], ['Fillet', <Fillet />], ['Shell', <Shell />], ['Combine', <Combine />], ['Split body', <Split />], ['Move', <Move />]] },
  { name: 'ASSEMBLE', min: 258, tools: [['New component', <NewComponent />], ['Joint', <Joint />], ['Bill of materials', <Bom />]] },
  { name: 'CONFIGURE', min: 191, tools: [['Configure model', <ConfigureModel />], ['Configuration table', <ConfigureTable />]] },
  { name: 'CONSTRUCT', min: 192, tools: [['Offset plane', <Construct />]] },
  { name: 'INSPECT', min: 146, tools: [['Measure', <Measure />]] },
  { name: 'INSERT', min: 259, tools: [['Insert derive', <InsertDerive />], ['Insert fastener', <Bolt />], ['Canvas', <Picture />]] },
  { name: 'SELECT', min: 138, tools: [['Select', <SelectTool />]] },
];

const features = ['sketch', 'extrude', 'sketch', 'sketch', 'extrude', 'extrude', 'extrude'];

const StatusIcons = () => (
  <StatusItems>
    <svg width="41" height="30" viewBox="0 0 41 30">
      <g fill="none" stroke="#e9e9e9" strokeWidth="2.200">
        <path d="M22 26H10C-2 25-1 9 9 8 14-2 33 0 34 13" />
        <path d="M11 22C3 19 8 9 15 13l9 9M14 8c7-3 11 1 13 5M18 6c6-4 12-1 12 6" />
      </g>
      <path d="M22 14l6-6v4h5v5h-5v4zM41 22l-6-6v4h-5v5h5v4z" fill="#45a3dc" />
    </svg>
    <svg width="27" height="27" viewBox="0 0 27 27"><circle cx="13.500" cy="13.500" r="12" fill="none" stroke="#e9e9e9" strokeWidth="2.500" /><path d="M10 8l9 5.500L10 19z" fill="#e9e9e9" /></svg>
    <svg width="17" height="28" viewBox="0 0 17 28"><path d="M1 8l14 12-7 6V2l7 6L1 20" fill="none" stroke="#e9e9e9" strokeWidth="2" /></svg>
    <svg width="46" height="24" viewBox="0 0 46 24"><rect x="1" y="1" width="41" height="22" rx="6" fill="none" stroke="#777" strokeWidth="2" /><rect x="4" y="4" width="4" height="16" rx="2" fill="#e9e9e9" /><path d="M43 8q3 1 3 4t-3 4z" fill="#777" /></svg>
    <svg width="31" height="24" viewBox="0 0 31 24"><g fill="none" stroke="#e9e9e9" strokeWidth="4"><path d="M1.500 9q14-14 28 0M6.500 14.500q9-9 18 0" /></g><path d="M10.500 18.500q5-4.500 10 0l-5 5z" fill="#e9e9e9" /></svg>
    <svg width="27" height="27" viewBox="0 0 27 27"><path d="M4 13a11 11 0 1 1 3 8" fill="none" stroke="#e9e9e9" strokeWidth="2.500" /><path d="M0 11h8l-4 6zM14 7h3l-.5 8h-2zM14 17h3v3h-3z" fill="#e9e9e9" /></svg>
    <svg width="27" height="27" viewBox="0 0 27 27"><circle cx="13.500" cy="13.500" r="12" fill="none" stroke="#e9e9e9" strokeWidth="2.500" /><ellipse cx="13.500" cy="10.500" rx="4.500" ry="5.500" fill="#e9e9e9" /><path d="M4 20q3-4 9.500-4t9.500 4q-4 6-9.500 6T4 20z" fill="#e9e9e9" /></svg>
    <InputSource>GB</InputSource>
    <svg width="24" height="25" viewBox="0 0 24 25"><circle cx="9.500" cy="9.500" r="8" fill="none" stroke="#e9e9e9" strokeWidth="2.500" /><path d="M15.500 15.500l7 8" stroke="#e9e9e9" strokeWidth="3" /></svg>
    <svg width="25" height="25" viewBox="0 0 25 25"><rect x="1" y="1" width="23" height="10" rx="5" fill="none" stroke="#e9e9e9" strokeWidth="2" /><circle cx="6.500" cy="6" r="3.500" fill="none" stroke="#e9e9e9" strokeWidth="2" /><rect y="13.500" width="25" height="11.500" rx="5.700" fill="#e9e9e9" /><circle cx="19" cy="19.200" r="3.500" fill="#202020" /></svg>
    <svg width="33" height="33" viewBox="0 0 33 33"><circle cx="16.500" cy="16.500" r="15.500" fill="none" stroke="#e9e9e9" strokeWidth="2" /><path d="M11 21l6-4 1.500 10" fill="none" stroke="#e9e9e9" strokeWidth="1.700" /></svg>
  </StatusItems>
);

export default function App() {
  return (
    <Page>
      <GlobalStyle />
      <MenuBar>
        <MenuItems>
          <AppleButton aria-label="Apple menu"><FaApple size={31} /></AppleButton>
          <MenuItem $bold>Fusion</MenuItem>
          {menus.map((m) => <MenuItem key={m}>{m}</MenuItem>)}
        </MenuItems>
        <StatusIcons />
      </MenuBar>

      <Window>
        <TitleBar>
          <TrafficLights>
            <Light $color="#ec6a5e" aria-label="Close window" />
            <Light $color="#f4bf4f" aria-label="Minimise" />
            <Light $color="#61c554" aria-label="Zoom" />
          </TrafficLights>
          <Title>Untitled* (LaumePropMo) - Autodesk Fusion Personal (Not for Commercial Use)</Title>
        </TitleBar>

        <TabStrip>
          <QuickTools>
            <PlainButton aria-label="Data panel">
              <svg width="27" height="27" viewBox="0 0 27 27" fill="currentColor">
                {[0, 9.5, 19].map((y) => [0, 9.5, 19].map((x) => <rect key={`${x}-${y}`} x={x} y={y} width="8" height="8" rx="1" />))}
              </svg>
            </PlainButton>
            <ToolWithMenu aria-label="File">
              <svg width="24" height="30" viewBox="0 0 24 30" fill="currentColor"><path d="M2 0h13v9h9v19q0 2-2 2H2q-2 0-2-2V2q0-2 2-2z" /><path d="M17 0l7 7h-7z" /></svg>
              <Caret color="#5f5f5f" w={13} />
            </ToolWithMenu>
            <PlainButton aria-label="Save document">
              <svg width="26" height="27" viewBox="0 0 26 27"><path d="M2 0h22q2 0 2 2v23q0 2-2 2H5l-5-5V2q0-2 2-2z" fill="currentColor" /><path d="M6 2v9h14V2M8 25v-7h10v7M13 20v6M13 3v5" fill="none" stroke="#d2d2d2" strokeWidth="2" /></svg>
            </PlainButton>
            <HistoryTools>
              <ToolWithMenu aria-label="Undo">
                <svg width="25" height="24" viewBox="0 0 25 24" fill="none" stroke="currentColor" strokeWidth="3.500"><path d="M11 1L3 9l8 8M3 9h8q11 1 11 14" /></svg>
                <Caret color="#5f5f5f" w={13} />
              </ToolWithMenu>
              <FadedTool aria-label="Redo">
                <svg width="25" height="24" viewBox="0 0 25 24" fill="none" stroke="currentColor" strokeWidth="3.500"><path d="M14 1l8 8-8 8M22 9h-8Q3 10 3 23" /></svg>
                <Caret color="#8e8e8e" w={13} />
              </FadedTool>
            </HistoryTools>
          </QuickTools>
          <HomeTab $width={72} aria-label="Home">
            <svg width="28" height="26" viewBox="0 0 28 26" fill="currentColor"><path d="M14 0l6 6V2h3v7l5 6h-4v11h-6v-8h-6v8H4V15H0z" /><path d="M13 20h3v6h-3z" /></svg>
          </HomeTab>
          <ActiveTab>
            <TabName>
              <svg width="22" height="27" viewBox="0 0 22 27"><path d="M5 12V7q1-5 6-5t6 5v5" fill="none" stroke="#808080" strokeWidth="3.500" /><path d="M0 10h22v17H0z" fill="#808080" /><path d="M3 14h16M3 18h16M3 22h16" stroke="#f1f1f1" strokeWidth="1.500" /></svg>
              <span>Untitled*</span>
            </TabName>
            <PlainButton aria-label="Close tab"><svg width="16" height="16" viewBox="0 0 16 16"><path d="M1 1l14 14M15 1L1 15" stroke="#6a6a6a" strokeWidth="2" /></svg></PlainButton>
          </ActiveTab>
          <SideTab $width={52} aria-label="New tab">
            <svg width="24" height="24" viewBox="0 0 24 24"><path d="M12 0v24M0 12h24" stroke="currentColor" strokeWidth="5" /></svg>
          </SideTab>
          <AccountTools>
            <PlainButton aria-label="Upgrade"><svg width="30" height="30" viewBox="0 0 30 30"><UpBadge x={15} y={15} /></svg></PlainButton>
            <PlainButton aria-label="Extensions">
              <svg width="29" height="29" viewBox="0 0 29 29"><circle cx="14.500" cy="14.500" r="14.500" fill="currentColor" /><path d="M0 20q4-1 5-5l2-2" fill="none" stroke="#cbcbcb" strokeWidth="3" /><path d="M9 9l3-2 9 10q-2 5-7 4l-6 5-3-3 5-4q-3-5-1-10z" fill="#cbcbcb" /><path d="M14 11l5-7M19 16l6-7" fill="none" stroke="#cbcbcb" strokeWidth="3" /></svg>
            </PlainButton>
            <JobStatus>
              <svg width="29" height="29" viewBox="0 0 29 29"><circle cx="14.500" cy="14.500" r="13.700" fill="none" stroke="currentColor" strokeWidth="1.600" /><circle cx="14.500" cy="14.500" r="11" fill="currentColor" /><path d="M14 7v9h7" fill="none" stroke="#cbcbcb" strokeWidth="2" /></svg>
              <span>1</span>
            </JobStatus>
            <PlainButton aria-label="Notifications">
              <svg width="26" height="30" viewBox="0 0 26 30"><path d="M10 3V0h4v3q7 1 7 12v5l4 4v2H0v-2l4-4v-5Q4 4 10 3zM8 27h8q-4 5-8 0z" fill="currentColor" /><circle cx="20" cy="8" r="6" fill="#0696d7" stroke="#cbcbcb" strokeWidth="1.500" /></svg>
            </PlainButton>
            <PlainButton aria-label="Help">
              <svg width="30" height="30" viewBox="0 0 30 30"><circle cx="15" cy="15" r="14.700" fill="currentColor" /><path d="M10 11q0-5 5-5t5 5q0 3-3 4-2 1-2 4M15 22v4" fill="none" stroke="#d2d2d2" strokeWidth="3.500" /></svg>
            </PlainButton>
            <Avatar>KP</Avatar>
          </AccountTools>
        </TabStrip>

        <Ribbon>
          <Workspace>
            <WorkspaceSelect aria-label="Workspace" defaultValue="DESIGN"><option>DESIGN</option></WorkspaceSelect>
            <WorkspaceCaret><Caret /></WorkspaceCaret>
          </Workspace>
          <RibbonBody>
            <RibbonTabs>
              {ribbonTabs.map((t, i) => <RibbonTab key={t} $active={i === 0}>{t}</RibbonTab>)}
            </RibbonTabs>
            <Groups>
              {groups.map((g, i) => (
                <Group key={g.name} $min={g.min} $first={i === 0}>
                  <GroupIcons>
                    {g.tools.map(([label, icon]) => <PlainButton key={label} aria-label={label}>{icon}</PlainButton>)}
                  </GroupIcons>
                  <GroupLabel>{g.name}<Caret w={11} /></GroupLabel>
                </Group>
              ))}
            </Groups>
          </RibbonBody>
        </Ribbon>

        <Canvas>
          <Scene />
          <ViewCube />

          <BrowserColumn>
            <PanelHeader>
              <PlainButton aria-label="Collapse"><svg width="36" height="12" viewBox="0 0 36 12" fill="#222"><path d="M0 6l9-6v12zM9 6l9-6v12z" /></svg></PlainButton>
              <span>BROWSER</span>
              <PlainButton aria-label="Hide browser"><Round /></PlainButton>
            </PanelHeader>
            <Tree>
              <TreeItem $root>
                <Arrow open />
                <RootBox>
                  <Eye />
                  <RootName><SmallCube />(Unsaved)</RootName>
                  <ActiveRadio type="radio" defaultChecked aria-label="Activate component" />
                </RootBox>
              </TreeItem>
              <TreeItem><Arrow /><TreeBox><Gear size={25} color="#7b7b7b" /><TreeName>Document Settings</TreeName></TreeBox></TreeItem>
              <TreeItem><Arrow /><TreeBox><Folder /><TreeName>Named Views</TreeName></TreeBox></TreeItem>
              <TreeItem><Arrow /><TreeBox><Eye off /><Folder /><TreeName>Origin</TreeName></TreeBox></TreeItem>
              <TreeItem>
                <Arrow />
                <TreeBox>
                  <Eye /><Folder /><TreeName>Bodies</TreeName>
                  <Squiggle width="142" height="8" viewBox="0 0 142 8">
                    {Array.from({ length: 13 }, (_, i) => <path key={i} d={`M${i * 11.1 + 1} 7l5-6`} stroke="#7e90b2" strokeWidth="4" />)}
                  </Squiggle>
                </TreeBox>
              </TreeItem>
              <TreeItem><Arrow /><TreeBox><Eye /><Folder /><TreeName>Sketches</TreeName></TreeBox></TreeItem>
            </Tree>
          </BrowserColumn>

          <Notice role="status">
            <NoticeText>
              <NoticeTitle>
                <svg width="31" height="28" viewBox="0 0 31 28"><path d="M15.500 0L31 28H0z" fill="#faa21b" /><path d="M15.500 9v9M15.500 21v4" stroke="#fff" strokeWidth="4" /></svg>
                Unsaved:
              </NoticeTitle>
              <span>Changes may be lost</span>
            </NoticeText>
            <SaveButton>Save</SaveButton>
          </Notice>

          <CommentsPanel>
            <PanelHeader><span /><span>COMMENTS</span><PlainButton aria-label="Show comments"><Round plus /></PlainButton></PanelHeader>
          </CommentsPanel>

          <NavBar role="toolbar" aria-label="Navigation">
            <NavButton $gap={9} aria-label="Orbit">
              <svg width="28" height="30" viewBox="0 0 28 30"><path d="M11 12v16h5V12M16 9V7h3l-5.500-6L8 7h3v5" fill="#dfe8ee" stroke="#3c4250" strokeWidth="1.500" /><path d="M11 12Q0 14 1 17q2 5 14 5 12-1 12-5 0-4-11-5" fill="none" stroke="#3c4250" strokeWidth="2" /><path d="M3 20l7-4v7z" fill="#222" /></svg>
              <Caret w={11} />
            </NavButton>
            <NavButton aria-label="Look at">
              <svg width="27" height="27" viewBox="0 0 27 27" stroke="#3c4250" strokeWidth="1.700"><path d="M3 8l7-5v3l8-4v6" fill="#c9ced6" /><path d="M1 8h25v17H1z" fill="#eef0f4" /><path d="M5 12h17v9H5z" fill="#8f98a8" /></svg>
            </NavButton>
            <NavButton aria-label="Pan">
              <svg width="28" height="30" viewBox="0 0 28 30"><path d="M9 28q-1-5-8-12 0-3 4-1l3 3L4 6q1-4 4 0l3 8-1-11q2-4 4 0l1 11 2-11q3-4 4 1l-1 11 4-8q4-2 3 1l-4 11q0 6-4 9z" fill="#f8f9fc" stroke="#3c4250" strokeWidth="1.600" /></svg>
            </NavButton>
            <NavButton aria-label="Zoom view">
              <svg width="30" height="30" viewBox="0 0 30 30"><circle cx="11" cy="12" r="10" fill="#e6f0f1" stroke="#5c6068" strokeWidth="1.600" /><path d="M18 19l9 9" stroke="#262b33" strokeWidth="4.500" /><path d="M22 4h7M25.500 0v8M22 11h7" stroke="#222" strokeWidth="1.500" /></svg>
            </NavButton>
            <NavButton $gap={8} aria-label="Fit">
              <svg width="30" height="30" viewBox="0 0 30 30"><path d="M1 2h27v27H1z" fill="none" stroke="#555" strokeWidth="1.500" strokeDasharray="6 2" /><circle cx="11" cy="12" r="10" fill="#e6f0f1" stroke="#5c6068" strokeWidth="1.600" /><path d="M18 19l9 9" stroke="#333" strokeWidth="5" /></svg>
              <Caret w={11} />
            </NavButton>
            <NavButton $gap={4} aria-label="Display settings">
              <svg width="29" height="29" viewBox="0 0 29 29"><path d="M1 1h27v21H1z" fill="#e4e8ee" stroke="#454b58" strokeWidth="1.700" /><path d="M4 4h21v15H4z" fill="#8fb2df" stroke="#2f4f86" strokeWidth="1.500" /><path d="M11 22h7v3l4 3H7l4-3z" fill="#b5bac4" stroke="#454b58" /></svg>
              <Caret w={11} />
            </NavButton>
            <NavButton $gap={4} aria-label="Grid and snaps">
              <svg width="28" height="28" viewBox="0 0 28 28"><path d="M1 1h26v26H1z" fill="#fff" /><path d="M1 16h26v11H1z" fill="#b9bec9" /><path d="M1 1h26v26H1zM5 1v26M9 1v26M13 1v26M17 1v26M21 1v26M24 1v26M1 5h26M1 9h26M1 13h26M1 17h26M1 21h26M1 24h26" fill="none" stroke="#5a5f6b" strokeWidth="1" /></svg>
              <Caret w={11} />
            </NavButton>
            <NavButton $gap={4} aria-label="Viewports">
              <svg width="28" height="24" viewBox="0 0 28 24"><path d="M1 1h26v22H1z" fill="#a9c4e8" stroke="#2f4f86" strokeWidth="1.700" /><path d="M14 1v22M1 12h26" stroke="#2f4f86" strokeWidth="2" /><path d="M4 4h7v5H4zM17 4h7v5h-7zM4 15h7v5H4zM17 15h7v5h-7z" fill="#86a9d8" stroke="#4c6fa8" /></svg>
              <Caret w={11} />
            </NavButton>
          </NavBar>
        </Canvas>

        <TimelineBar>
          <Playback>
            <PlainButton aria-label="Go to start"><svg width="21" height="22" viewBox="0 0 21 22" fill="currentColor"><path d="M0 0h4v22H0zM21 0v22L4 11z" /></svg></PlainButton>
            <PlainButton aria-label="Step back"><svg width="25" height="22" viewBox="0 0 25 22" fill="currentColor"><path d="M19 0v22L0 11zM21 7h4v9h-4z" /></svg></PlainButton>
            <PlainButton aria-label="Play"><svg width="22" height="28" viewBox="0 0 22 28" fill="currentColor"><path d="M0 0l22 14L0 28z" /></svg></PlainButton>
            <PlainButton aria-label="Step forward"><svg width="25" height="22" viewBox="0 0 25 22" fill="currentColor"><path d="M6 0v22l19-11zM0 7h4v9H0z" /></svg></PlainButton>
            <PlainButton aria-label="Go to end"><svg width="21" height="22" viewBox="0 0 21 22" fill="currentColor"><path d="M17 0h4v22h-4zM0 0v22l17-11z" /></svg></PlainButton>
          </Playback>
          <Features>
            {features.map((f, i) => (
              <Feature key={i}>
                {i === 5 && (
                  <Pending width="30" height="11" viewBox="0 0 30 11"><path d="M2 10l7-9M11 10l7-9M20 10l7-9" stroke="#4c4c4c" strokeWidth="4" /></Pending>
                )}
                <PlainButton aria-label={f}>{f === 'sketch' ? <SketchShape dot="#1a8de4" edit /> : <Extrude size={30} />}</PlainButton>
              </Feature>
            ))}
          </Features>
          <Marker><svg width="24" height="60" viewBox="0 0 24 60" fill="#5f5f5f"><path d="M0 0h23v7l-9 11v42h-4V18L0 7z" /></svg></Marker>
          <SettingsButton aria-label="Settings"><Gear size={28} color="#6a6a6a" /></SettingsButton>
        </TimelineBar>
      </Window>
    </Page>
  );
}
